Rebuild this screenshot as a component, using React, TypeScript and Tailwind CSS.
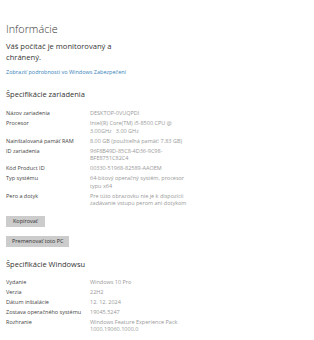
const deviceRows: [string, string[]][] = [
  ['Názov zariadenia', ['DESKTOP-0VUQPDI']],
  ['Procesor', ['Intel(R) Core(TM) i5-8500 CPU @', '3.00GHz   3.00 GHz']],
  ['Nainštalovaná pamäť RAM', ['8.00 GB (použiteľná pamäť: 7.83 GB)']],
  ['ID zariadenia', ['96F8B49D-85C8-4D36-9C98-', 'BFE8751C82C4']],
  ['Kód Product ID', ['00330-51968-82589-AAOEM']],
  ['Typ systému', ['64-bitový operačný systém, procesor', 'typu x64']],
  ['Pero a dotyk', ['Pre túto obrazovku nie je k dispozícii', 'zadávanie vstupu perom ani dotykom']],
];

const windowsRows: [string, string[]][] = [
  ['Vydanie', ['Windows 10 Pro']],
  ['Verzia', ['22H2']],
  ['Dátum inštalácie', ['12. 12. 2024']],
  ['Zostava operačného systému', ['19045.5247']],
  ['Rozhranie', ['Windows Feature Experience Pack', '1000.19060.1000.0']],
];

function SpecTable({ rows }: { rows: [string, string[]][] }) {
  return (
    <div className="grid grid-cols-[84px_1fr] gap-y-[2.5px] text-[5.5px] leading-[7.5px]">
      {rows.map(([label, value]) => (
        <div key={label} className="contents">
          <div className="text-[#444]">{label}</div>
          <div className="text-[#999]">
            {value.map((line) => (
              <div key={line} className="whitespace-pre">{line}</div>
            ))}
          </div>
        </div>
      ))}
    </div>
  );
}

export default function App() {
  return (
    <div className="w-[314px] h-[340px] overflow-hidden bg-white pl-[6px] pt-[21px] font-['Open_Sans','Noto_Sans',sans-serif]">
      {/* Header */}
      <h1 className="text-[10.8px] leading-[16px] font-light text-[#333]">Informácie</h1>
      <p className="mt-[4px] text-[7.6px] leading-[10.5px] text-[#333]">
        Váš počítač je monitorovaný a
        <br />
        chránený.
      </p>
      <div className="mt-[6px] text-[5.5px] leading-[8px] text-[#3582b8]">Zobraziť podrobnosti vo Windows Zabezpečení</div>

      {/* Device */}
      <h2 className="mt-[13px] text-[7.5px] leading-[10px] text-[#333]">Špecifikácie zariadenia</h2>
      <div className="mt-[11px]">
        <SpecTable rows={deviceRows} />
      </div>
      <button className="mt-[8px] block bg-[#cccccc] px-[7px] h-[11px] text-[5.5px] leading-[11px] text-[#333]">Kopírovať</button>
      <button className="mt-[9px] block bg-[#cccccc] px-[6px] h-[11px] text-[5.5px] leading-[11px] text-[#333]">Premenovať toto PC</button>

      {/* Windows */}
      <h2 className="mt-[12px] text-[7.5px] leading-[10px] text-[#333]">Špecifikácie Windowsu</h2>
      <div className="mt-[10px]">
        <SpecTable rows={windowsRows} />
      </div>
    </div>
  );
}
